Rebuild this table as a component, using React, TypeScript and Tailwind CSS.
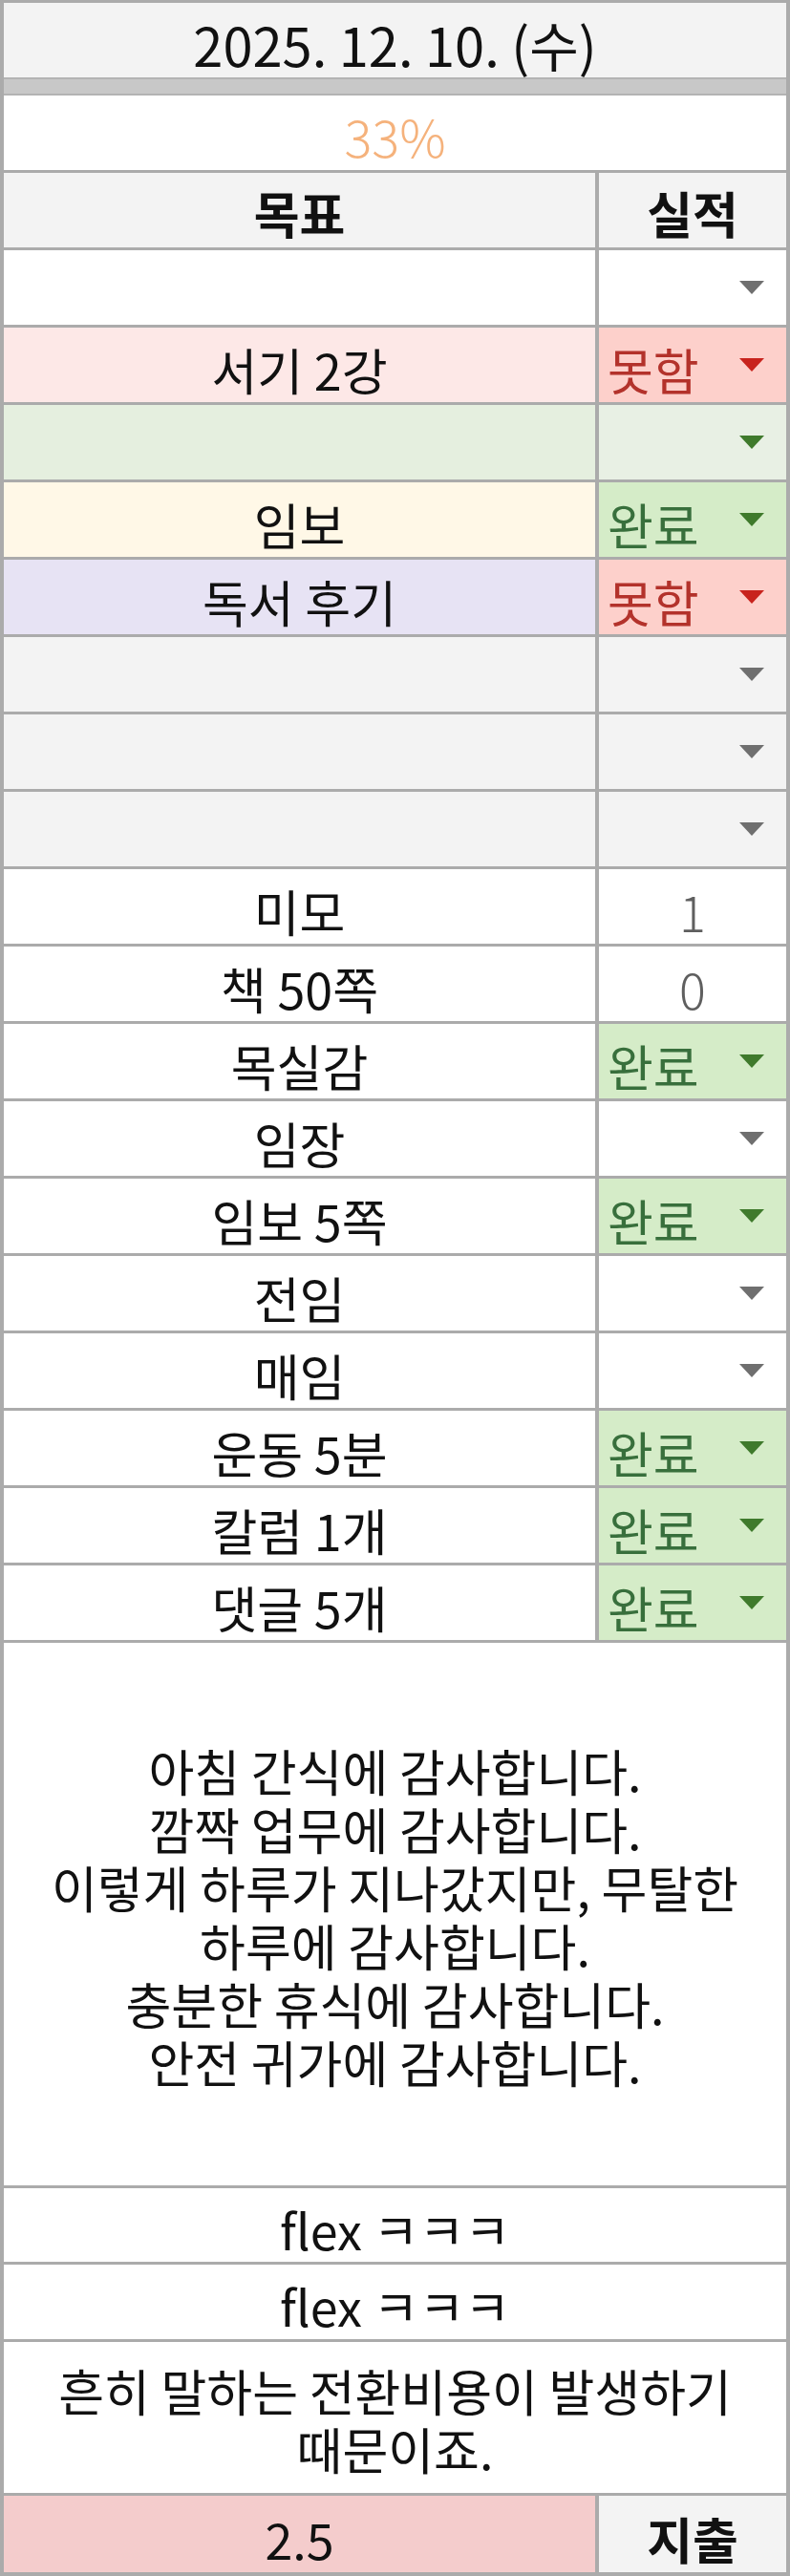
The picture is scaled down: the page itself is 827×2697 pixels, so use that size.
import React from 'react';

type Kind = 'blank' | 'done' | 'fail' | 'num';

interface Row {
  label: string;
  left: string;
  right: string;
  kind: Kind;
  caret?: string;
  value?: string;
}

const Caret = ({ color }: { color: string }) => (
  <svg width="26" height="14" viewBox="0 0 26 14" className="shrink-0">
    <path d="M0 0 H26 L13 14 Z" fill={color} />
  </svg>
);

const rows: Row[] = [
  { label: '', left: 'bg-white', right: 'bg-white', kind: 'blank', caret: '#6f6f6f' },
  { label: '서기 2강', left: 'bg-[#fde8e7]', right: 'bg-[#fdd0cb]', kind: 'fail' },
  { label: '', left: 'bg-[#e5efdf]', right: 'bg-[#e8f0e4]', kind: 'blank', caret: '#3f7a2c' },
  { label: '임보', left: 'bg-[#fff8e7]', right: 'bg-[#d5ecc8]', kind: 'done' },
  { label: '독서 후기', left: 'bg-[#e7e3f4]', right: 'bg-[#fdd0cb]', kind: 'fail' },
  { label: '', left: 'bg-[#f3f3f3]', right: 'bg-[#f3f3f3]', kind: 'blank', caret: '#6f6f6f' },
  { label: '', left: 'bg-[#f3f3f3]', right: 'bg-[#f3f3f3]', kind: 'blank', caret: '#6f6f6f' },
  { label: '', left: 'bg-[#f3f3f3]', right: 'bg-[#f3f3f3]', kind: 'blank', caret: '#6f6f6f' },
  { label: '미모', left: 'bg-white', right: 'bg-white', kind: 'num', value: '1' },
  { label: '책 50쪽', left: 'bg-white', right: 'bg-white', kind: 'num', value: '0' },
  { label: '목실감', left: 'bg-white', right: 'bg-[#d5ecc8]', kind: 'done' },
  { label: '임장', left: 'bg-white', right: 'bg-white', kind: 'blank', caret: '#6f6f6f' },
  { label: '임보 5쪽', left: 'bg-white', right: 'bg-[#d5ecc8]', kind: 'done' },
  { label: '전임', left: 'bg-white', right: 'bg-white', kind: 'blank', caret: '#6f6f6f' },
  { label: '매임', left: 'bg-white', right: 'bg-white', kind: 'blank', caret: '#6f6f6f' },
  { label: '운동 5분', left: 'bg-white', right: 'bg-[#d5ecc8]', kind: 'done' },
  { label: '칼럼 1개', left: 'bg-white', right: 'bg-[#d5ecc8]', kind: 'done' },
  { label: '댓글 5개', left: 'bg-white', right: 'bg-[#d5ecc8]', kind: 'done' },
];

const thanks = [
  '아침 간식에 감사합니다.',
  '깜짝 업무에 감사합니다.',
  '이렇게 하루가 지나갔지만, 무탈한',
  '하루에 감사합니다.',
  '충분한 휴식에 감사합니다.',
  '안전 귀가에 감사합니다.',
];

const StatusCell = ({ row }: { row: Row }) => {
  if (row.kind === 'num') {
    return (
      <div className={`flex-1 flex items-center justify-center pt-[10px] text-[#5f5f5f] font-light ${row.right}`}>
        {row.value}
      </div>
    );
  }
  if (row.kind === 'blank') {
    return (
      <div className={`flex-1 flex items-center justify-end pr-[23px] ${row.right}`}>
        <Caret color={row.caret ?? '#6f6f6f'} />
      </div>
    );
  }
  const done = row.kind === 'done';
  return (
    <div className={`flex-1 flex items-center justify-between pl-[9px] pr-[23px] ${row.right}`}>
      <span className={`pt-[9px] ${done ? 'text-[#386f3c]' : 'text-[#b3322b]'}`}>{done ? '완료' : '못함'}</span>
      <Caret color={done ? '#3f7a2c' : '#c8231d'} />
    </div>
  );
};

export default function App() {
  return (
    <div className="w-[827px] h-[2697px] bg-white border-x-[4px] border-t-[3px] border-b-[4px] border-[#ababab] font-['Noto_Sans_CJK_KR','Noto_Sans',sans-serif] text-[52px] leading-none text-[#111]">
      <div className="h-[78px] bg-[#f3f3f3] flex items-center justify-center pt-[8px] text-[56px]">
        2025. 12. 10. (수)
      </div>
      <div className="h-[19px] bg-[#c8c8c8] border-y-[2px] border-[#b3b3b3]" />
      <div className="h-[81px] border-b-[3px] border-[#ababab] flex items-center justify-center pt-[6px] text-[54px] font-light text-[#f5b27c]">
        33%
      </div>
      <div className="h-[81px] border-b-[3px] border-[#ababab] flex bg-[#f3f3f3] font-bold">
        <div className="w-[623px] border-r-[4px] border-[#ababab] flex items-center justify-center pt-[6px]">목표</div>
        <div className="flex-1 flex items-center justify-center pt-[6px]">실적</div>
      </div>

      {rows.map((row, i) => (
        <div key={i} className="h-[81px] border-b-[3px] border-[#ababab] flex">
          <div className={`w-[623px] border-r-[4px] border-[#ababab] flex items-center justify-center pt-[10px] ${row.left}`}>
            {row.label}
          </div>
          <StatusCell row={row} />
        </div>
      ))}

      <div className="h-[571px] border-b-[3px] border-[#ababab] flex flex-col items-center justify-center pt-[4px] leading-[61px]">
        {thanks.map((line) => (
          <div key={line}>{line}</div>
        ))}
      </div>
      <div className="h-[80px] border-b-[3px] border-[#ababab] flex items-center justify-center pt-[8px]">flex ㅋㅋㅋ</div>
      <div className="h-[81px] border-b-[3px] border-[#ababab] flex items-center justify-center pt-[8px]">flex ㅋㅋㅋ</div>
      <div className="h-[161px] border-b-[3px] border-[#ababab] flex flex-col items-center justify-center pt-[4px] leading-[61px]">
        <div>흔히 말하는 전환비용이 발생하기</div>
        <div>때문이죠.</div>
      </div>
      <div className="h-[80px] flex">
        <div className="w-[623px] border-r-[4px] border-[#ababab] bg-[#f4cccc] flex items-center justify-center pt-[10px]">2.5</div>
        <div className="flex-1 bg-[#f3f3f3] flex items-center justify-center pt-[10px] font-bold">지출</div>
      </div>
    </div>
  );
}
